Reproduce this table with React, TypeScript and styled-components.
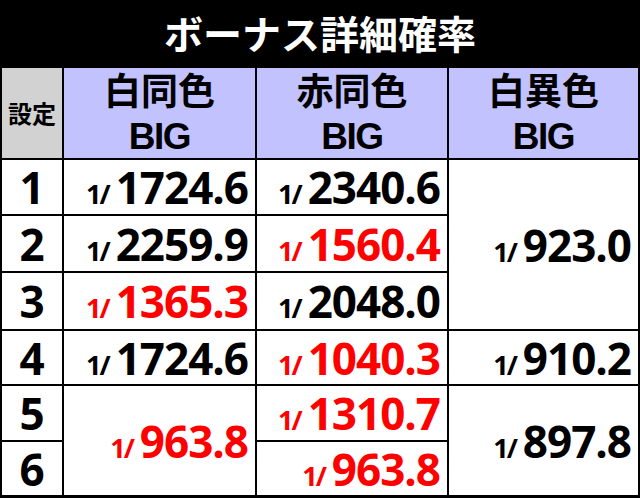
import React from "react";
import styled, { createGlobalStyle } from "styled-components";

type Rate = {
  value: string;
  red?: boolean;
  row: number;
  col: number;
  span?: number;
};

const RATES: Rate[] = [
  { value: "1724.6", row: 2, col: 2 },
  { value: "2340.6", row: 2, col: 3 },
  { value: "923.0", row: 2, col: 4, span: 3 },
  { value: "2259.9", row: 3, col: 2 },
  { value: "1560.4", row: 3, col: 3, red: true },
  { value: "1365.3", row: 4, col: 2, red: true },
  { value: "2048.0", row: 4, col: 3 },
  { value: "1724.6", row: 5, col: 2 },
  { value: "1040.3", row: 5, col: 3, red: true },
  { value: "910.2", row: 5, col: 4 },
  { value: "963.8", row: 6, col: 2, span: 2, red: true },
  { value: "1310.7", row: 6, col: 3, red: true },
  { value: "897.8", row: 6, col: 4, span: 2 },
  { value: "963.8", row: 7, col: 3, red: true },
];

const HEADERS = ["白同色", "赤同色", "白異色"];

const App = () => {
  return (
    <>
      <GlobalStyle />
      <Page>
        <Title>ボーナス詳細確率</Title>
        <Table>
          <SettingHead>設定</SettingHead>
          {HEADERS.map((h, i) => (
            <ColHead key={h} $col={i + 2}>
              <HeadJp>{h}</HeadJp>
              <HeadEn>BIG</HeadEn>
            </ColHead>
          ))}
          {[1, 2, 3, 4, 5, 6].map((n) => (
            <SettingNo key={n} $row={n + 1}>
              {n}
            </SettingNo>
          ))}
          {RATES.map((r) => (
            <RateCell
              key={`${r.row}-${r.col}`}
              $row={r.row}
              $col={r.col}
              $span={r.span ?? 1}
              $red={!!r.red}
            >
              <RateText>
                <Prefix>1/</Prefix>
                <Value>{r.value}</Value>
              </RateText>
            </RateCell>
          ))}
        </Table>
      </Page>
    </>
  );
};

export default App;

const GlobalStyle = createGlobalStyle`
  html, body {
    margin: 0;
    padding: 0;
    background: #000;
  }
`;

const Page = styled.div`
  width: 640px;
  height: 498px;
  background: #000;
  display: flex;
  flex-direction: column;
  font-family: "Open Sans", "Noto Sans CJK JP", sans-serif;
  font-weight: 700;
`;

const Title = styled.div`
  height: 68px;
  display: flex;
  align-items: center;
  justify-content: center;
  padding-bottom: 4px;
  box-sizing: border-box;
  color: #fff;
  font-family: "Noto Sans CJK JP", sans-serif;
  font-size: 39px;
  font-weight: 700;
  line-height: 1;
`;

const Table = styled.div`
  display: grid;
  grid-template-columns: 60px 191px 190px 189px;
  grid-template-rows: 90px 54px 55px 56px 53px 54px 53px;
  gap: 2px;
  padding: 0 2px 3px;
`;

const Cell = styled.div`
  display: flex;
  align-items: center;
  justify-content: center;
  background: #fff;
  color: #000;
`;

const SettingHead = styled(Cell)`
  grid-row: 1;
  grid-column: 1;
  background: #d2d2d2;
  font-family: "Noto Sans CJK JP", sans-serif;
  font-size: 24px;
  line-height: 1;
`;

const ColHead = styled(Cell)<{ $col: number }>`
  grid-row: 1;
  grid-column: ${(p) => p.$col};
  flex-direction: column;
  background: #c2c2ff;
  padding-bottom: 1px;
  box-sizing: border-box;
`;

const HeadJp = styled.div`
  font-family: "Noto Sans CJK JP", sans-serif;
  font-size: 37px;
  line-height: 42px;
`;

const HeadEn = styled.div`
  margin-top: 6px;
  font-family: "Liberation Sans", "Open Sans", sans-serif;
  font-size: 37px;
  line-height: 42px;
  letter-spacing: -1.5px;
`;

const SettingNo = styled(Cell)<{ $row: number }>`
  grid-row: ${(p) => p.$row};
  grid-column: 1;
  font-size: 44px;
  line-height: 1;
`;

const RateCell = styled(Cell)<{
  $row: number;
  $col: number;
  $span: number;
  $red: boolean;
}>`
  grid-row: ${(p) => p.$row} / span ${(p) => p.$span};
  grid-column: ${(p) => p.$col};
  justify-content: flex-end;
  padding-right: 7px;
  color: ${(p) => (p.$red ? "#ff0000" : "#000")};
`;

const RateText = styled.div`
  display: flex;
  align-items: baseline;
  gap: 7px;
  line-height: 1;
`;

const Prefix = styled.span`
  font-size: 27px;
  letter-spacing: -2px;
`;

const Value = styled.span`
  font-size: 44px;
  letter-spacing: -1px;
`;
